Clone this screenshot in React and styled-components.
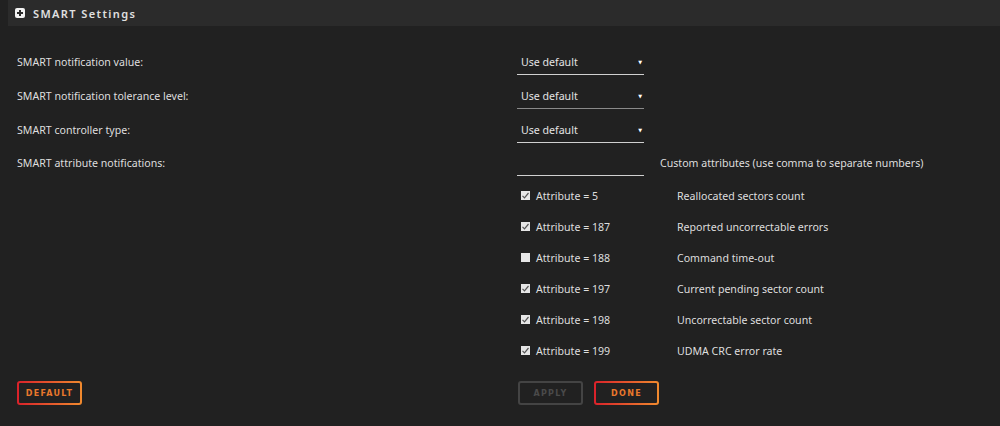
import styled, {createGlobalStyle} from "styled-components";

const GlobalStyle = createGlobalStyle`
  html, body {
    margin: 0;
    padding: 0;
    background: #212121;
  }
  body {
    font-family: "Noto Sans", "DejaVu Sans", sans-serif;
    color: #dcdcdc;
  }
`;

const Page = styled.div`
  width: 1000px;
  height: 426px;
  background: #212121;
  overflow: hidden;
`;

const Header = styled.div`
  margin-left: 8px;
  height: 26px;
  background: #2b2b2b;
  display: flex;
  align-items: center;
  gap: 8px;
  padding-left: 7px;
`;

const HeaderTitle = styled.span`
  font-size: 11px;
  font-weight: 600;
  letter-spacing: 1.4px;
  color: #e0e0e0;
`;

const Form = styled.div`
  padding: 19px 0 0 17px;
`;

const Row = styled.div`
  display: grid;
  grid-template-columns: 500px auto 1fr;
  align-items: center;
  height: ${p => p.$h || 34}px;
`;

const Label = styled.span`
  font-size: 10.6px;
  color: #dedede;
`;

const Select = styled.div`
  width: 127px;
  height: 26px;
  box-sizing: border-box;
  border-bottom: 1px solid ${p => p.$dim ? "#8a8a8a" : "#d0d0d0"};
  display: flex;
  align-items: center;
  justify-content: space-between;
  padding: 0 2px 0 4px;
  font-size: 10.6px;
  color: #e4e4e4;
`;

const Arrow = styled.span`
  font-size: 5px;
  color: #fff;
`;

const TextInput = styled.div`
  width: 127px;
  height: 26px;
  box-sizing: border-box;
  border-bottom: 1px solid #d0d0d0;
`;

const Hint = styled.span`
  font-size: 10.6px;
  color: #dedede;
  margin-left: 16px;
`;

const AttrList = styled.div`
  margin-top: 1px;
  padding-left: 517px;
`;

const AttrRow = styled.div`
  display: grid;
  grid-template-columns: 160px 1fr;
  align-items: center;
  height: 31px;
`;

const Check = styled.label`
  display: flex;
  align-items: center;
  gap: 6px;
  padding-left: 4px;
  font-size: 10.6px;
  color: #dedede;
`;

const Box = styled.span`
  width: 9px;
  height: 9px;
  background: #e6e6e6;
  display: inline-flex;
  align-items: center;
  justify-content: center;
`;

const Desc = styled.span`
  font-size: 10.6px;
  color: #dedede;
`;

const Footer = styled.div`
  display: flex;
  margin-top: 15px;
  padding-left: 17px;
`;

const Actions = styled.div`
  display: flex;
  gap: 11px;
  margin-left: 436px;
`;

const Button = styled.button`
  width: 65px;
  height: 24px;
  box-sizing: border-box;
  border: 2px solid transparent;
  border-radius: 3px;
  font-family: "DejaVu Sans", sans-serif;
  font-size: 8px;
  font-weight: bold;
  letter-spacing: 1.3px;
  padding: 0;
  cursor: pointer;
  background: ${p => p.$disabled
    ? "linear-gradient(#212121, #212121) padding-box, linear-gradient(#444, #444) border-box"
    : "linear-gradient(#212121, #212121) padding-box, linear-gradient(90deg, #d9212a, #f08a2e) border-box"};
  color: ${p => p.$disabled ? "#4a4a4a" : "#e9782c"};
`;

function PlusIcon() {
  return (
    <svg width="10" height="10" viewBox="0 0 10 10">
      <rect x="0" y="0" width="10" height="10" rx="2" fill="#f2f2f2" />
      <path d="M5 2v6M2 5h6" stroke="#2b2b2b" strokeWidth="2" />
    </svg>
  );
}

function CheckMark() {
  return (
    <svg width="9" height="9" viewBox="0 0 9 9">
      <path d="M1.5 4.8l2 2 4-4.8" stroke="#555" strokeWidth="1.2" fill="none" />
    </svg>
  );
}

const attributes = [
  {id: 5, on: true, desc: "Reallocated sectors count"},
  {id: 187, on: true, desc: "Reported uncorrectable errors"},
  {id: 188, on: false, desc: "Command time-out"},
  {id: 197, on: true, desc: "Current pending sector count"},
  {id: 198, on: true, desc: "Uncorrectable sector count"},
  {id: 199, on: true, desc: "UDMA CRC error rate"},
];

export default function App() {
  return (
    <Page>
      <GlobalStyle />
      <Header>
        <PlusIcon />
        <HeaderTitle>SMART Settings</HeaderTitle>
      </Header>
      <Form>
        <Row>
          <Label>SMART notification value:</Label>
          <Select>Use default<Arrow>▼</Arrow></Select>
        </Row>
        <Row>
          <Label>SMART notification tolerance level:</Label>
          <Select $dim>Use default<Arrow>▼</Arrow></Select>
        </Row>
        <Row>
          <Label>SMART controller type:</Label>
          <Select>Use default<Arrow>▼</Arrow></Select>
        </Row>
        <Row $h={32}>
          <Label>SMART attribute notifications:</Label>
          <TextInput />
          <Hint>Custom attributes (use comma to separate numbers)</Hint>
        </Row>
      </Form>
      <AttrList>
        {attributes.map(a => (
          <AttrRow key={a.id}>
            <Check>
              <Box>{a.on && <CheckMark />}</Box>
              Attribute = {a.id}
            </Check>
            <Desc>{a.desc}</Desc>
          </AttrRow>
        ))}
      </AttrList>
      <Footer>
        <Button>DEFAULT</Button>
        <Actions>
          <Button $disabled>APPLY</Button>
          <Button>DONE</Button>
        </Actions>
      </Footer>
    </Page>
  );
}
